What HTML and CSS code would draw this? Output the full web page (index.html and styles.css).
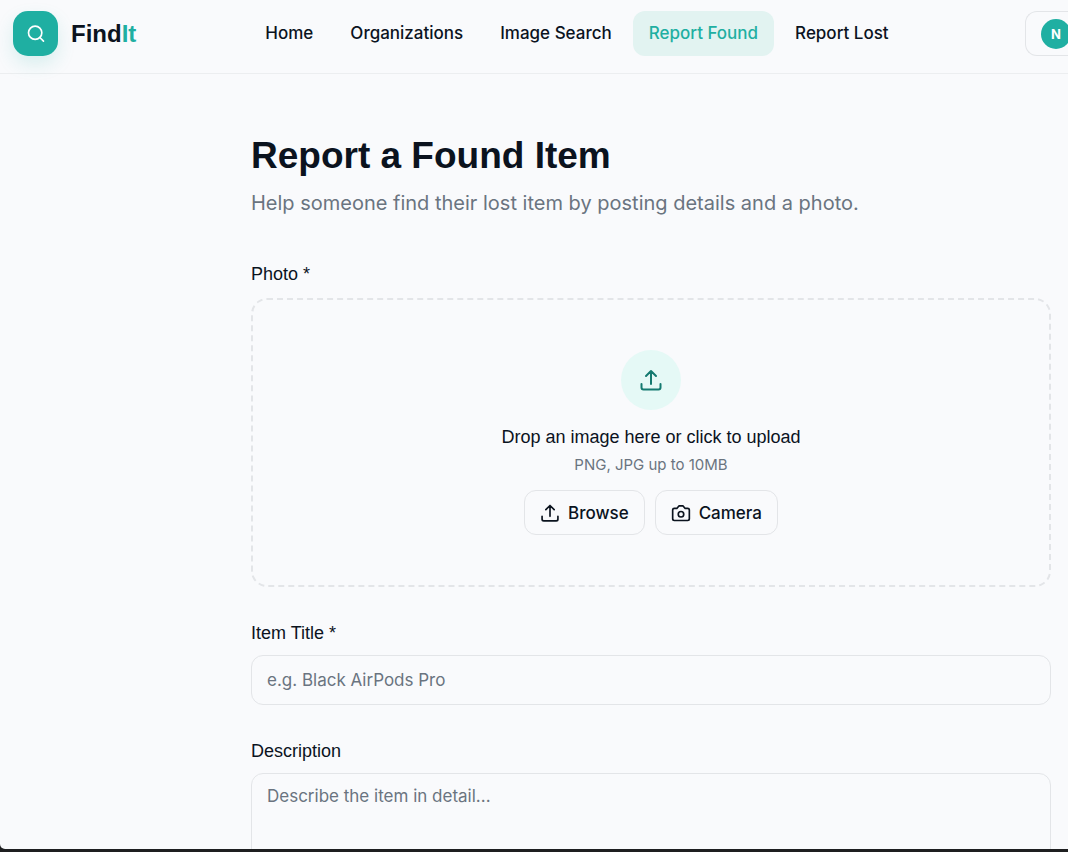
FILE: index.html
```html
<!DOCTYPE html>
<html lang="en">
<head>
  <meta charset="UTF-8">
  <meta name="viewport" content="width=device-width, initial-scale=1.0">
  <title>FindIt - Report Found</title>
  <link rel="stylesheet" href="styles.css">
</head>
<body>
  <div class="app">
    <header class="topbar">
      <a class="brand" href="#">
        <span class="brand-icon">
          <svg width="20" height="20" viewBox="0 0 24 24"><circle cx="11" cy="10.500" r="8"/><path d="m21 20.500-4.300-4.300"/></svg>
        </span>
        <span class="brand-name">Find<span class="accent">It</span></span>
      </a>
      <nav class="nav">
        <a href="#">Home</a>
        <a href="#">Organizations</a>
        <a href="#">Image Search</a>
        <a href="#" class="active">Report Found</a>
        <a href="#">Report Lost</a>
      </nav>
      <button type="button" class="profile"><span class="avatar">N</span></button>
    </header>

    <main>
      <h1>Report a Found Item</h1>
      <p class="subtitle">Help someone find their lost item by posting details and a photo.</p>

      <form>
        <div class="field">
          <label for="photo">Photo *</label>
          <input type="file" id="photo" accept="image/png, image/jpeg" hidden>
          <div class="dropzone">
            <div class="drop-icon">
              <svg width="24" height="24" viewBox="0 0 24 24"><path d="M12 16V3M7 8l5-5 5 5M2.500 16v3.500a2 2 0 0 0 2 2h15a2 2 0 0 0 2-2V16"/></svg>
            </div>
            <p class="drop-text">Drop an image here or click to upload</p>
            <p class="hint">PNG, JPG up to 10MB</p>
            <div class="actions">
              <button type="button" class="btn">
                <svg width="20" height="20" viewBox="0 0 24 24"><path d="M12 16V3M7 8l5-5 5 5M2.500 16v3.500a2 2 0 0 0 2 2h15a2 2 0 0 0 2-2V16"/></svg>
                Browse
              </button>
              <button type="button" class="btn">
                <svg width="20" height="20" viewBox="0 0 24 24"><path d="M14.500 3.500h-5L7 6.500H4a2 2 0 0 0-2 2v10.500a2 2 0 0 0 2 2h16a2 2 0 0 0 2-2V8.500a2 2 0 0 0-2-2h-3z"/><circle cx="12" cy="13.500" r="3.300"/></svg>
                Camera
              </button>
            </div>
          </div>
        </div>

        <div class="field">
          <label for="title">Item Title *</label>
          <input type="text" id="title" placeholder="e.g. Black AirPods Pro">
        </div>

        <div class="field">
          <label for="description">Description</label>
          <textarea id="description" rows="4" placeholder="Describe the item in detail..."></textarea>
        </div>
      </form>
    </main>
  </div>
</body>
</html>
```
FILE: styles.css
```css
* {
  margin: 0;
  padding: 0;
  box-sizing: border-box;
}

body {
  height: 100vh;
  padding-bottom: 3px;
  overflow: hidden;
  background-color: #1e1f20;
  color: #0b131e;
  font-family: Inter, sans-serif;
  font-size: 18px;
}

.app {
  height: 100%;
  overflow: hidden;
  background-color: #f9fafc;
  border-bottom-left-radius: 5px;
}

a {
  color: inherit;
  text-decoration: none;
}

svg {
  flex-shrink: 0;
  fill: none;
  stroke: currentColor;
  stroke-width: 2;
  stroke-linecap: round;
  stroke-linejoin: round;
}

/* top bar */
.topbar {
  display: flex;
  align-items: center;
  padding: 11px 0 17px 13px;
  border-bottom: 1px solid #eceef0;
}

.brand {
  display: flex;
  align-items: center;
  gap: 13px;
}

.brand-icon {
  display: flex;
  align-items: center;
  justify-content: center;
  width: 45px;
  height: 45px;
  border-radius: 15px;
  background-color: #1fafa2;
  color: white;
  box-shadow: 0 8px 18px rgba(31, 175, 162, 0.15);
}

.brand-name {
  font-family: "Liberation Sans", Arial, sans-serif;
  font-size: 24px;
  font-weight: bold;
}

.accent {
  color: #1fafa2;
}

.nav {
  display: flex;
  gap: 5px;
  margin-left: 113px;
}

.nav a {
  padding: 0 16px;
  border-radius: 12px;
  font-size: 17px;
  font-weight: 500;
  line-height: 45px;
  white-space: nowrap;
}

.nav .active {
  background-color: #e2f3f1;
  color: #1fafa2;
}

.profile {
  display: flex;
  align-items: center;
  width: 43px;
  height: 45px;
  margin-left: auto;
  padding-left: 15px;
  overflow: hidden;
  border: 1px solid #e3e5e8;
  border-right: none;
  border-radius: 12px 0 0 12px;
  background-color: transparent;
}

.avatar {
  flex-shrink: 0;
  width: 30px;
  height: 30px;
  border-radius: 50%;
  background-color: #1fafa2;
  color: white;
  font-family: Inter, sans-serif;
  font-size: 13px;
  font-weight: bold;
  line-height: 30px;
  text-align: center;
}

/* form */
main {
  padding: 56px 17px 0 251px;
}

h1 {
  font-family: "Liberation Sans", Arial, sans-serif;
  font-size: 37px;
  line-height: 52px;
}

.subtitle {
  margin-top: 6px;
  color: #6a7480;
  font-size: 20px;
  line-height: 30px;
}

form {
  display: flex;
  flex-direction: column;
  gap: 36px;
  margin-top: 46px;
}

.field {
  display: flex;
  flex-direction: column;
  gap: 12px;
}

label,
.drop-text {
  font-family: "Liberation Sans", Arial, sans-serif;
  line-height: 20px;
}

.dropzone {
  display: flex;
  flex-direction: column;
  align-items: center;
  margin-top: 2px;
  padding: 50px;
  border: 2px dashed #e3e5e8;
  border-radius: 16px;
}

.drop-icon {
  display: flex;
  align-items: center;
  justify-content: center;
  width: 60px;
  height: 60px;
  margin-bottom: 17px;
  border-radius: 50%;
  background-color: #e5f9f6;
  color: #147a70;
}

.hint {
  margin-top: 8px;
  color: #6a7480;
  font-size: 15px;
  line-height: 20px;
}

.actions {
  display: flex;
  gap: 10px;
  margin-top: 15px;
}

.btn {
  display: flex;
  align-items: center;
  gap: 8px;
  height: 45px;
  padding: 0 15px;
  border: 1px solid #e3e5e8;
  border-radius: 12px;
  background-color: transparent;
  color: inherit;
  font-family: inherit;
  font-size: 17px;
  font-weight: 500;
}

input,
textarea {
  width: 100%;
  padding: 0 15px;
  border: 1px solid #e3e5e8;
  border-radius: 12px;
  background-color: transparent;
  color: inherit;
  font-family: inherit;
  font-size: 17px;
}

input {
  height: 50px;
}

textarea {
  padding: 10px 15px;
  line-height: 25px;
  resize: none;
}

::placeholder {
  color: #6a7480;
}
```
